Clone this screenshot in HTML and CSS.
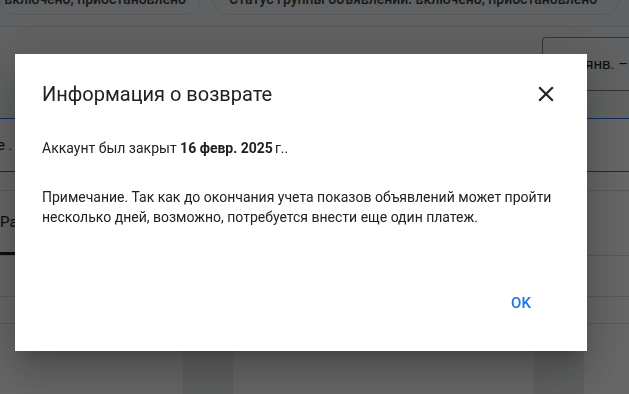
FILE: index.html
```html
<!DOCTYPE html>
<html lang="ru">
<head>
    <meta charset="UTF-8">
    <meta name="viewport" content="width=device-width, initial-scale=1.0">
    <title>Информация о возврате</title>
    <link rel="stylesheet" href="styles.css">
</head>
<body>
    <div class="page">
        <div class="top">
            <div class="filters">
                <div class="chip chip-first">Статус кампании: включено, приостановлено</div>
                <div class="chip">Статус группы объявлений: включено, приостановлено</div>
            </div>
            <div class="header">
                <div class="date-btn">1 янв. – 16 февр. 2025 г.</div>
            </div>
        </div>
        <div class="banner">re .</div>
        <div class="spacer"></div>
        <div class="tabs">
            <div class="tab">Ра</div>
        </div>
        <div class="row"></div>
        <div class="row row-short"></div>
        <div class="columns">
            <div class="col col-a"></div>
            <div class="col col-b"></div>
        </div>
    </div>

    <div class="scrim">
        <div class="dialog">
            <div class="dialog-head">
                <h2>Информация о возврате</h2>
                <button class="close" aria-label="Закрыть">
                    <svg width="26" height="26" viewBox="0 0 24 24"><path d="M19 6.41L17.59 5 12 10.59 6.41 5 5 6.41 10.59 12 5 17.59 6.41 19 12 13.41 17.59 19 19 17.59 13.41 12z"/></svg>
                </button>
            </div>
            <p class="closed">Аккаунт был закрыт <b>16 февр. 2025</b>г..</p>
            <p class="note">Примечание. Так как до окончания учета показов объявлений может пройти несколько дней, возможно, потребуется внести еще один платеж.</p>
            <div class="actions">
                <button class="btn">OK</button>
            </div>
        </div>
    </div>
</body>
</html>
```

FILE: styles.css
```css
* {
    margin: 0;
    padding: 0;
    box-sizing: border-box;
}

body {
    font-family: Roboto, 'Liberation Sans', sans-serif;
    background-color: #fff;
    color: #202124;
    overflow: hidden;
}

.page {
    height: 394px;
    overflow: hidden;
}

.top {
    background-color: #f1f3f4;
}

.filters {
    display: grid;
    grid-template-columns: 201px 408px;
    column-gap: 11px;
    margin-top: -17px;
    padding-bottom: 11px;
    border-bottom: 1px solid #dadce0;
}

.chip {
    height: 32px;
    border: 1px solid #dadce0;
    border-radius: 16px;
    font-size: 14px;
    font-weight: 500;
    color: #3c4043;
    display: flex;
    align-items: center;
    padding: 0 10px 0 16px;
    white-space: nowrap;
    overflow: hidden;
}

.chip-first {
    justify-content: flex-end;
    padding-right: 14px;
}

.header {
    padding: 10px 0 27px 542px;
}

.date-btn {
    height: 54px;
    border: 1px solid #80868b;
    border-right: none;
    border-radius: 4px 0 0 4px;
    display: flex;
    align-items: center;
    padding-left: 30px;
    font-size: 15px;
    color: #202124;
    white-space: nowrap;
    overflow: hidden;
}

.banner {
    height: 54px;
    border-top: 1px solid #1a73e8;
    border-bottom: 1px solid #1a73e8;
    display: flex;
    align-items: center;
    font-size: 14px;
    text-indent: -7px;
    white-space: nowrap;
}

.spacer {
    height: 19px;
    border-bottom: 1px solid #dadce0;
}

.tabs {
    height: 65px;
    border-bottom: 1px solid #dadce0;
}

.tab {
    width: 40px;
    height: 100%;
    margin-left: -20px;
    padding-left: 20px;
    display: flex;
    align-items: center;
    font-size: 15px;
    border-bottom: 3px solid #202124;
}

.row {
    height: 41px;
    border-bottom: 1px solid #dadce0;
}

.row-short {
    height: 27px;
}

.columns {
    display: flex;
    height: 80px;
}

.col {
    background-color: #eceef0;
    width: 50px;
}

.col-a {
    margin-left: 183px;
}

.col-b {
    margin-left: 301px;
}

/* dialog */

.scrim {
    position: fixed;
    top: 0;
    left: 0;
    right: 0;
    bottom: 0;
    background-color: rgba(0, 0, 0, 0.6);
    padding: 54px 0 0 15px;
}

.dialog {
    width: 572px;
    background-color: #fff;
    padding: 26px 28px 30px 27px;
    box-shadow: 0 11px 15px -7px rgba(0, 0, 0, 0.2), 0 24px 38px 3px rgba(0, 0, 0, 0.14), 0 9px 46px 8px rgba(0, 0, 0, 0.12);
}

.dialog-head {
    display: flex;
    justify-content: space-between;
    align-items: center;
    height: 28px;
}

.dialog-head h2 {
    font-size: 20px;
    font-weight: 400;
    line-height: 28px;
    color: #202124;
}

.close {
    border: none;
    background: none;
    width: 26px;
    height: 26px;
    display: flex;
}

.close svg {
    fill: #202124;
}

.closed, .note {
    font-size: 14px;
    line-height: 20px;
    color: #202124;
}

.closed {
    margin-top: 30px;
}

.closed b {
    margin-right: 2px;
}

.note {
    margin-top: 29px;
}

.actions {
    display: flex;
    justify-content: flex-end;
    margin-top: 58px;
    padding-right: 6px;
}

.btn {
    min-width: 64px;
    height: 36px;
    border: none;
    background: none;
    font-family: Roboto, sans-serif;
    font-size: 15px;
    font-weight: 500;
    color: #1a73e8;
    cursor: pointer;
}
```
